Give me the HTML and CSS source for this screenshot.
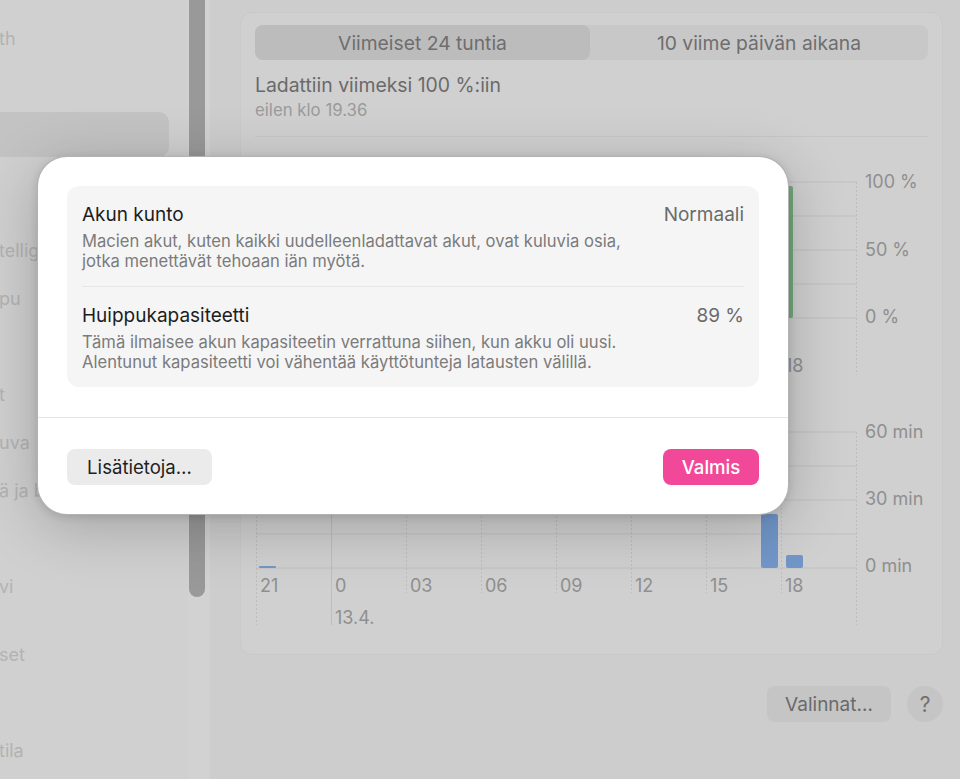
FILE: index.html
```html
<!DOCTYPE html>
<html lang="fi">
<head>
    <meta charset="UTF-8">
    <meta name="viewport" content="width=device-width, initial-scale=1.0">
    <title>Akku</title>
    <link rel="stylesheet" href="styles.css">
</head>
<body>
    <div class="window">
        <aside class="sidebar">
            <div class="side-group">
                <div class="side-item">th</div>
                <div class="side-item"></div>
                <div class="side-item selected"></div>
                <div class="side-item"></div>
            </div>
            <div class="side-group">
                <div class="side-item">tellig</div>
                <div class="side-item">pu</div>
                <div class="side-item"></div>
                <div class="side-item">t</div>
                <div class="side-item">uva</div>
                <div class="side-item">ä ja b</div>
                <div class="side-item"></div>
                <div class="side-item">vi</div>
            </div>
            <div class="side-group">
                <div class="side-item">set</div>
                <div class="side-item"></div>
                <div class="side-item">tila</div>
            </div>
        </aside>
        <div class="scroll-track">
            <div class="scroll-thumb"></div>
        </div>

        <main class="main">
            <section class="card">
                <div class="segmented">
                    <div class="segment active">Viimeiset 24 tuntia</div>
                    <div class="segment">10 viime päivän aikana</div>
                </div>
                <div class="last-charge">
                    <div class="last-title">Ladattiin viimeksi 100 %:iin</div>
                    <div class="last-sub">eilen klo 19.36</div>
                </div>
                <div class="divider"></div>

                <!-- akun varaustaso -->
                <svg class="chart chart-level" width="672" height="243" viewBox="0 0 672 243">
                    <g class="grid">
                        <line x1="1" y1="45" x2="602" y2="45"/>
                        <line x1="1" y1="79" x2="602" y2="79"/>
                        <line x1="1" y1="113" x2="602" y2="113"/>
                        <line x1="1" y1="147" x2="602" y2="147"/>
                        <line x1="1" y1="181" x2="602" y2="181"/>
                    </g>
                    <g class="vgrid">
                        <line x1="1.5" y1="45" x2="1.5" y2="238"/>
                        <line class="solid" x1="76.5" y1="45" x2="76.5" y2="238"/>
                        <line x1="151.5" y1="45" x2="151.5" y2="213"/>
                        <line x1="226.5" y1="45" x2="226.5" y2="213"/>
                        <line x1="301.5" y1="45" x2="301.5" y2="213"/>
                        <line x1="376.5" y1="45" x2="376.5" y2="213"/>
                        <line x1="451.5" y1="45" x2="451.5" y2="213"/>
                        <line x1="526.5" y1="45" x2="526.5" y2="213"/>
                        <line x1="601.5" y1="45" x2="601.5" y2="238"/>
                    </g>
                    <rect class="bar-green" x="522" y="49" width="16" height="132" rx="2"/>
                    <g class="axis">
                        <text x="610" y="46">100 %</text>
                        <text x="610" y="114">50 %</text>
                        <text x="610" y="181">0 %</text>
                        <text x="530" y="230">18</text>
                    </g>
                </svg>

                <!-- näytön käyttö -->
                <svg class="chart chart-usage" width="672" height="260" viewBox="0 0 672 260">
                    <g class="grid">
                        <line x1="1" y1="52" x2="602" y2="52"/>
                        <line x1="1" y1="86" x2="602" y2="86"/>
                        <line x1="1" y1="120" x2="602" y2="120"/>
                        <line x1="1" y1="154" x2="602" y2="154"/>
                        <line x1="1" y1="188" x2="602" y2="188"/>
                    </g>
                    <g class="vgrid">
                        <line x1="1.5" y1="52" x2="1.5" y2="245"/>
                        <line class="solid" x1="76.5" y1="52" x2="76.5" y2="245"/>
                        <line x1="151.5" y1="52" x2="151.5" y2="213"/>
                        <line x1="226.5" y1="52" x2="226.5" y2="213"/>
                        <line x1="301.5" y1="52" x2="301.5" y2="213"/>
                        <line x1="376.5" y1="52" x2="376.5" y2="213"/>
                        <line x1="451.5" y1="52" x2="451.5" y2="213"/>
                        <line x1="526.5" y1="52" x2="526.5" y2="213"/>
                        <line x1="601.5" y1="52" x2="601.5" y2="245"/>
                    </g>
                    <g class="bars-blue">
                        <rect x="4" y="186" width="17" height="2" rx="1"/>
                        <rect x="506" y="134" width="17" height="54" rx="2"/>
                        <rect x="531" y="175" width="17" height="13" rx="2"/>
                    </g>
                    <g class="axis">
                        <text x="610" y="53">60 min</text>
                        <text x="610" y="120">30 min</text>
                        <text x="610" y="187">0 min</text>
                        <text x="5" y="207">21</text>
                        <text x="80" y="207">0</text>
                        <text x="155" y="207">03</text>
                        <text x="230" y="207">06</text>
                        <text x="305" y="207">09</text>
                        <text x="380" y="207">12</text>
                        <text x="455" y="207">15</text>
                        <text x="530" y="207">18</text>
                        <text x="80" y="239">13.4.</text>
                    </g>
                </svg>
            </section>

            <div class="footer">
                <button class="btn-gray">Valinnat…</button>
                <button class="btn-help">?</button>
            </div>
        </main>
    </div>

    <div class="dialog">
        <div class="dialog-body">
            <div class="info-group">
                <div class="info-row">
                    <div class="info-head">
                        <span class="info-title">Akun kunto</span>
                        <span class="info-value">Normaali</span>
                    </div>
                    <p class="info-desc">Macien akut, kuten kaikki uudelleenladattavat akut, ovat kuluvia osia,<br>jotka menettävät tehoaan iän myötä.</p>
                </div>
                <div class="info-row">
                    <div class="info-head">
                        <span class="info-title">Huippukapasiteetti</span>
                        <span class="info-value">89 %</span>
                    </div>
                    <p class="info-desc">Tämä ilmaisee akun kapasiteetin verrattuna siihen, kun akku oli uusi.<br>Alentunut kapasiteetti voi vähentää käyttötunteja latausten välillä.</p>
                </div>
            </div>
        </div>
        <div class="dialog-footer">
            <button class="btn-secondary">Lisätietoja…</button>
            <button class="btn-primary">Valmis</button>
        </div>
    </div>
</body>
</html>
```

FILE: styles.css
```css
* {
    box-sizing: border-box;
}
body {
    margin: 0;
    width: 960px;
    height: 779px;
    overflow: hidden;
    font-family: Inter, "Noto Sans", sans-serif;
    background-color: #cdcdcd;
    position: relative;
}
.window {
    display: flex;
    height: 779px;
}

/* sivupalkki */
.sidebar {
    width: 188px;
    padding-top: 14px;
    background-color: #d0d0d0;
    display: flex;
    flex-direction: column;
    gap: 20px;
    overflow: hidden;
}
.side-item {
    height: 48px;
    width: 169px;
    display: flex;
    align-items: center;
    font-size: 18px;
    color: #b3b3b3;
    white-space: nowrap;
    margin-left: -1px;
}
.side-item.selected {
    height: 45px;
    margin: 2px 0 1px -10px;
    width: 179px;
    border-radius: 10px;
    background-color: #c3c3c3;
}
.scroll-track {
    width: 22px;
    background-color: #d2d2d2;
    padding-left: 1px;
}
.scroll-thumb {
    width: 16px;
    height: 597px;
    background-color: #999999;
    border-radius: 0 0 8px 8px;
}

/* pääalue */
.main {
    flex: 1;
    padding: 12px 17px 0 30px;
}
.card {
    height: 643px;
    background-color: #d0d0d0;
    border: 1px solid #c9c9c9;
    border-radius: 12px;
    padding: 12px 14px 0 14px;
}
.segmented {
    display: grid;
    grid-template-columns: 335px 1fr;
    height: 35px;
    background-color: #c8c8c8;
    border-radius: 8px;
}
.segment {
    display: flex;
    align-items: center;
    justify-content: center;
    font-size: 19.3px;
    color: #6e6e6e;
}
.segment.active {
    background-color: #bcbcbc;
    border-radius: 8px;
}
.last-charge {
    margin-top: 13px;
}
.last-title {
    font-size: 19.4px;
    line-height: 24px;
    color: #6a6a6a;
}
.last-sub {
    margin-top: 3px;
    font-size: 16.8px;
    line-height: 20px;
    color: #9b9b9b;
}
.divider {
    margin-top: 16px;
    height: 1px;
    background-color: #c6c6c6;
}
.chart {
    display: block;
}
.chart .grid line {
    stroke: #c0c0c0;
    stroke-width: 1;
}
.chart .vgrid line {
    stroke: #bdbdbd;
    stroke-width: 1;
    stroke-dasharray: 2 2;
}
.chart .vgrid line.solid {
    stroke-dasharray: none;
}
.chart .axis text {
    font-family: Inter, "Noto Sans", sans-serif;
    font-size: 18px;
    fill: #8f8f8f;
    dominant-baseline: middle;
}
.bar-green {
    fill: #74ac7c;
}
.bars-blue rect {
    fill: #7196c8;
}

.footer {
    margin-top: 31px;
    display: flex;
    justify-content: flex-end;
    gap: 16px;
}
.btn-gray {
    height: 36px;
    width: 124px;
    border: none;
    border-radius: 8px;
    background-color: #c5c5c5;
    color: #6a6a6a;
    font-family: inherit;
    font-size: 19px;
}
.btn-help {
    width: 36px;
    height: 36px;
    border: none;
    border-radius: 50%;
    background-color: #c5c5c5;
    color: #707070;
    font-family: inherit;
    font-size: 21px;
}

/* valintaikkuna */
.dialog {
    position: absolute;
    left: 37px;
    top: 156px;
    width: 752px;
    height: 359px;
    background-color: #ffffff;
    border: 1px solid rgba(0, 0, 0, 0.3);
    border-radius: 30px;
    box-shadow: 0 12px 60px rgba(0, 0, 0, 0.22), 0 2px 8px rgba(0, 0, 0, 0.12);
}
.dialog-body {
    padding: 29px 29px 30px;
    border-bottom: 1px solid #e4e4e4;
}
.info-group {
    background-color: #f5f5f5;
    border-radius: 12px;
}
.info-row {
    margin: 0 15px;
    padding: 16px 0 15px;
}
.info-row + .info-row {
    border-top: 1px solid #e6e6e6;
}
.info-head {
    display: flex;
    justify-content: space-between;
    align-items: center;
    height: 24px;
}
.info-title {
    font-size: 19px;
    color: #1d1d1d;
}
.info-value {
    font-size: 19px;
    color: #6b6b6b;
}
.info-desc {
    margin: 5px 0 0;
    font-size: 16.6px;
    line-height: 20px;
    color: #7b7b7b;
}
.dialog-footer {
    display: flex;
    justify-content: space-between;
    padding: 31px 29px;
}
.btn-secondary {
    height: 36px;
    width: 145px;
    border: none;
    border-radius: 8px;
    background-color: #ebebeb;
    color: #1f1f1f;
    font-family: inherit;
    font-size: 18.6px;
}
.btn-primary {
    height: 36px;
    width: 96px;
    border: none;
    border-radius: 8px;
    background-color: #f2489a;
    color: #ffffff;
    font-family: inherit;
    font-size: 18.6px;
    font-weight: 500;
}
```
